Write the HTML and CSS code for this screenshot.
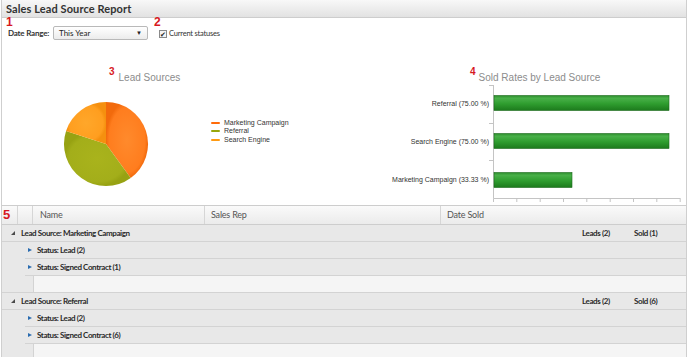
FILE: index.html
```html
<!DOCTYPE html>
<html lang="en">
<head>
<meta charset="UTF-8">
<title>Sales Lead Source Report</title>
<link rel="stylesheet" href="styles.css">
</head>
<body>

<div class="report">
    <div class="title-bar">Sales Lead Source Report</div>

    <div class="filters">
        <div class="filter filter-range">
            <span class="marker">1</span>
            <div class="filter-row">
                <label class="filter-label">Date Range:</label>
                <div class="select">
                    <span>This Year</span>
                    <span class="select-arrow">&#9660;</span>
                </div>
            </div>
        </div>
        <div class="filter filter-status">
            <span class="marker">2</span>
            <label class="check"><span class="check-box">&#10004;</span>Current statuses</label>
        </div>
    </div>

    <div class="charts">
        <div class="chart chart-pie">
            <div class="chart-title"><span class="chart-marker">3</span>Lead Sources</div>
            <div class="pie-body">
                <svg class="pie" width="86" height="86" viewBox="0 0 86 86">
                    <defs>
                        <radialGradient id="gMarketing" cx="0.5" cy="0.5" r="0.5">
                            <stop offset="0" stop-color="#ff8a2c"/>
                            <stop offset="0.85" stop-color="#ff7d1e"/>
                            <stop offset="1" stop-color="#f26a0c"/>
                        </radialGradient>
                        <radialGradient id="gReferral" cx="0.5" cy="0.5" r="0.5">
                            <stop offset="0" stop-color="#a9b31c"/>
                            <stop offset="0.85" stop-color="#a3ae1a"/>
                            <stop offset="1" stop-color="#97a212"/>
                        </radialGradient>
                        <radialGradient id="gSearch" cx="0.5" cy="0.5" r="0.5">
                            <stop offset="0" stop-color="#ffa72a"/>
                            <stop offset="0.85" stop-color="#ff9e1f"/>
                            <stop offset="1" stop-color="#f5900f"/>
                        </radialGradient>
                    </defs>
                    <!-- 40% / 40% / 20%, starting at 12 o'clock -->
                    <path d="M43 43 L43 1 A42 42 0 0 1 67.69 76.98 Z" fill="url(#gMarketing)"/>
                    <path d="M43 43 L67.69 76.98 A42 42 0 0 1 3.06 30.02 Z" fill="url(#gReferral)"/>
                    <path d="M43 43 L3.06 30.02 A42 42 0 0 1 43 1 Z" fill="url(#gSearch)"/>
                </svg>
                <ul class="legend">
                    <li><span class="legend-line marketing"></span>Marketing Campaign</li>
                    <li><span class="legend-line referral"></span>Referral</li>
                    <li><span class="legend-line search"></span>Search Engine</li>
                </ul>
            </div>
        </div>

        <div class="chart chart-bar">
            <div class="chart-title"><span class="chart-marker">4</span>Sold Rates by Lead Source</div>
            <svg class="bars" width="344" height="126" viewBox="0 0 344 126">
                <defs>
                    <linearGradient id="gBar" x1="0" y1="0" x2="0" y2="1">
                        <stop offset="0" stop-color="#2c8c2c"/>
                        <stop offset="0.18" stop-color="#49b049"/>
                        <stop offset="0.55" stop-color="#2f9d2f"/>
                        <stop offset="1" stop-color="#1c7a1c"/>
                    </linearGradient>
                </defs>
                <g class="axis">
                    <line x1="151.5" y1="6" x2="151.5" y2="119.5"/>
                    <line x1="147" y1="6.5" x2="151.5" y2="6.5"/>
                    <line x1="147" y1="44.5" x2="151.5" y2="44.5"/>
                    <line x1="147" y1="81.5" x2="151.5" y2="81.5"/>
                    <line x1="151.5" y1="119.5" x2="338.5" y2="119.5"/>
                    <line x1="151.5" y1="119.5" x2="151.5" y2="123"/>
                    <line x1="174.8" y1="119.5" x2="174.8" y2="123"/>
                    <line x1="198.2" y1="119.5" x2="198.2" y2="123"/>
                    <line x1="221.5" y1="119.5" x2="221.5" y2="123"/>
                    <line x1="244.8" y1="119.5" x2="244.8" y2="123"/>
                    <line x1="268.2" y1="119.5" x2="268.2" y2="123"/>
                    <line x1="291.5" y1="119.5" x2="291.5" y2="123"/>
                    <line x1="314.8" y1="119.5" x2="314.8" y2="123"/>
                    <line x1="338.2" y1="119.5" x2="338.2" y2="123"/>
                </g>
                <g class="bar-labels">
                    <text x="147" y="27">Referral (75.00 %)</text>
                    <text x="147" y="65">Search Engine (75.00 %)</text>
                    <text x="147" y="103">Marketing Campaign (33.33 %)</text>
                </g>
                <rect class="bar" x="152" y="16.5" width="175" height="15" fill="url(#gBar)"/>
                <rect class="bar" x="152" y="54.5" width="175" height="15" fill="url(#gBar)"/>
                <rect class="bar" x="152" y="93.5" width="78" height="15" fill="url(#gBar)"/>
            </svg>
        </div>
    </div>

    <div class="grid">
        <div class="grid-head">
            <div class="col col-mark"><span class="marker marker-big">5</span></div>
            <div class="col col-blank"></div>
            <div class="col col-name">Name</div>
            <div class="col col-rep">Sales Rep</div>
            <div class="col col-date">Date Sold</div>
        </div>

        <div class="group-row">
            <span class="tri-open"></span>
            <span class="group-name">Lead Source: Marketing Campaign</span>
            <span class="count">Leads (2)</span>
            <span class="count">Sold (1)</span>
        </div>
        <div class="status-row"><span class="tri-closed"></span>Status: Lead (2)</div>
        <div class="status-row"><span class="tri-closed"></span>Status: Signed Contract (1)</div>
        <div class="empty-row"><div class="empty-cell"></div></div>

        <div class="group-row">
            <span class="tri-open"></span>
            <span class="group-name">Lead Source: Referral</span>
            <span class="count">Leads (2)</span>
            <span class="count">Sold (6)</span>
        </div>
        <div class="status-row"><span class="tri-closed"></span>Status: Lead (2)</div>
        <div class="status-row"><span class="tri-closed"></span>Status: Signed Contract (6)</div>
        <div class="empty-row"><div class="empty-cell"></div></div>
    </div>
</div>

</body>
</html>
```

FILE: styles.css
```css
body {
    margin: 0;
    font-family: "Lato", "Open Sans", sans-serif;
    color: #333;
    background-color: #fff;
}
.report {
    width: 684px;
    height: 357px;
    margin-left: 1px;
    border-left: 1px solid #cfcfcf;
    border-right: 1px solid #cfcfcf;
    overflow: hidden;
}
.title-bar {
    height: 17px;
    line-height: 18px;
    padding-left: 4px;
    font-size: 11px;
    font-weight: bold;
    letter-spacing: 0.1px;
    color: #333;
    background: linear-gradient(#f8f8f8, #e2e2e2);
    border-bottom: 1px solid #cdcdcd;
}

/* filters */
.filters {
    display: flex;
    height: 23px;
}
.filter {
    display: flex;
    flex-direction: column;
}
.marker {
    display: block;
    height: 9px;
    line-height: 9px;
    font-family: "Liberation Sans", sans-serif;
    font-size: 12px;
    font-weight: bold;
    color: #d7191f;
}
.filter-range {
    padding-left: 4px;
}
.filter-row {
    display: flex;
    align-items: center;
    margin-top: -1px;
    margin-left: 2px;
}
.filter-label {
    width: 45px;
    white-space: nowrap;
    font-size: 8px;
    font-weight: bold;
    letter-spacing: -0.2px;
}
.select {
    width: 83px;
    height: 12px;
    line-height: 12px;
    padding: 0 5px;
    border: 1px solid #b9b9b9;
    border-radius: 2px;
    background: linear-gradient(#fff, #ececec);
    display: flex;
    justify-content: space-between;
    font-size: 8px;
    color: #222;
}
.select-arrow {
    font-size: 6px;
    color: #222;
}
.filter-status {
    margin-left: 6px;
}
.check {
    display: flex;
    align-items: center;
    margin-top: 2px;
    margin-left: 5px;
    font-size: 7.5px;
    letter-spacing: -0.2px;
    color: #333;
}
.check-box {
    width: 6px;
    height: 6px;
    border: 1px solid #8a8a8a;
    background: #f4f4f4;
    font-size: 7px;
    line-height: 6px;
    color: #222;
    margin-right: 2px;
    overflow: hidden;
}

/* charts */
.charts {
    display: flex;
    height: 164px;
    font-family: "Liberation Sans", sans-serif;
}
.chart-pie {
    width: 342px;
}
.chart-bar {
    flex: 1;
}
.chart-title {
    margin-top: 24px;
    height: 14px;
    line-height: 14px;
    font-size: 10px;
    color: #8c8c8c;
}
.chart-pie .chart-title {
    padding-left: 107px;
}
.chart-bar .chart-title {
    padding-left: 128px;
}
.chart-marker {
    vertical-align: 6px;
    margin-right: 4px;
    font-size: 10px;
    font-weight: bold;
    color: #d7191f;
}
.chart-bar .chart-marker {
    margin-right: 3px;
}
.pie-body {
    display: flex;
    align-items: flex-start;
}
.pie {
    margin-top: 22px;
    margin-left: 61px;
}
.legend {
    list-style: none;
    margin: 40px 0 0 62px;
    padding: 0;
    font-size: 7px;
    line-height: 8.3px;
    color: #333;
}
.legend li {
    display: flex;
    align-items: center;
}
.legend-line {
    width: 9px;
    height: 2px;
    border-radius: 1px;
    margin-right: 4px;
}
.legend-line.marketing { background-color: #ff6b0a; }
.legend-line.referral { background-color: #98a60a; }
.legend-line.search { background-color: #ff9a12; }

.bars {
    display: block;
}
.axis line {
    stroke: #c4c4c4;
    stroke-width: 1;
}
.bar-labels text {
    font-size: 7px;
    fill: #333;
    text-anchor: end;
}
.bar {
    stroke: #1b6a1b;
    stroke-width: 0.6;
}

/* grid */
.grid {
    font-size: 8px;
    letter-spacing: -0.4px;
}
.grid-head {
    display: flex;
    height: 18px;
    line-height: 18px;
    border-top: 1px solid #cdcdcd;
    border-bottom: 1px solid #cdcdcd;
    background: linear-gradient(#fafafa, #ebebeb);
    color: #555;
    font-size: 9px;
    letter-spacing: -0.2px;
}
.col {
    border-right: 1px solid #d6d6d6;
    box-sizing: border-box;
}
.col-mark { width: 16px; padding-left: 1px; }
.col-blank { width: 15px; }
.col-name { width: 172px; padding-left: 7px; }
.col-rep { width: 236px; padding-left: 6px; }
.col-date { flex: 1; padding-left: 6px; border-right: none; }
.marker-big {
    height: 18px;
    line-height: 18px;
    font-size: 13px;
    letter-spacing: 0;
}

.group-row {
    display: flex;
    align-items: center;
    height: 16px;
    padding-left: 9px;
    background-color: #e8e8e8;
    border-bottom: 1px solid #d3d3d3;
    font-weight: bold;
    color: #2a2a2a;
}
.group-name {
    flex: 1;
}
.count {
    width: 52px;
}
.tri-open {
    width: 0;
    height: 0;
    border-left: 4px solid transparent;
    border-bottom: 4px solid #4a4a4a;
    margin-right: 6px;
}
.status-row {
    display: flex;
    align-items: center;
    height: 16px;
    margin-left: 23px;
    padding-left: 3px;
    background-color: #e8e8e8;
    border-bottom: 1px solid #d3d3d3;
    font-weight: bold;
    color: #2a2a2a;
}
.grid > .status-row {
    box-shadow: -23px 0 0 #e8e8e8;
}
.tri-closed {
    width: 0;
    height: 0;
    border-top: 2.5px solid transparent;
    border-bottom: 2.5px solid transparent;
    border-left: 4px solid #2b6cb0;
    margin-right: 5px;
}
.empty-row {
    height: 16px;
    padding-left: 31px;
    background-color: #e8e8e8;
    border-bottom: 1px solid #d3d3d3;
}
.empty-cell {
    height: 16px;
    background-color: #f5f5f5;
    border-left: 1px solid #d3d3d3;
}
```
